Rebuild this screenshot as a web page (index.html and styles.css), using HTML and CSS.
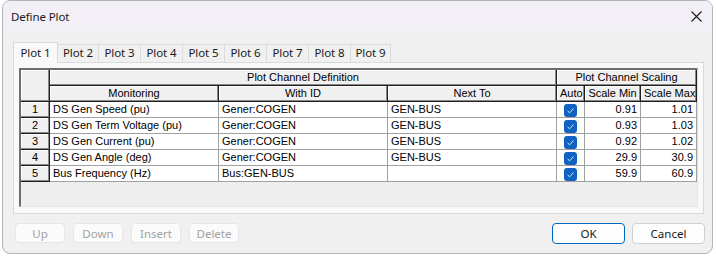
FILE: index.html
```html
<!DOCTYPE html>
<html lang="en">
<head>
<meta charset="UTF-8">
<title>Define Plot</title>
<link rel="stylesheet" href="styles.css">
</head>
<body>

    <!-- Dialog -->
    <div class="window">
        <div class="titlebar">
            <span class="title">Define Plot</span>
            <svg class="close" width="11" height="11" viewBox="0 0 11 11">
                <path d="M0.5 0.5 L10.5 10.5 M10.5 0.5 L0.5 10.5" stroke="#1b1b1b" stroke-width="1.1" fill="none"/>
            </svg>
        </div>

        <div class="content">
            <div class="tabs">
                <div class="tab active">Plot 1</div>
                <div class="tab first">Plot 2</div>
                <div class="tab">Plot 3</div>
                <div class="tab">Plot 4</div>
                <div class="tab">Plot 5</div>
                <div class="tab">Plot 6</div>
                <div class="tab">Plot 7</div>
                <div class="tab">Plot 8</div>
                <div class="tab last">Plot 9</div>
            </div>

            <div class="panel">
                <div class="grid">
                    <table>
                        <colgroup>
                            <col class="c-num">
                            <col class="c-text">
                            <col class="c-text">
                            <col class="c-text">
                            <col class="c-auto">
                            <col class="c-scale">
                            <col class="c-scale">
                        </colgroup>
                        <thead>
                            <tr>
                                <th class="corner" rowspan="2"></th>
                                <th colspan="3">Plot Channel Definition</th>
                                <th colspan="3">Plot Channel Scaling</th>
                            </tr>
                            <tr>
                                <th>Monitoring</th>
                                <th>With ID</th>
                                <th>Next To</th>
                                <th>Auto</th>
                                <th>Scale Min</th>
                                <th>Scale Max</th>
                            </tr>
                        </thead>
                        <tbody id="rows"></tbody>
                    </table>
                </div>
            </div>

            <div class="buttons">
                <div class="button-group">
                    <button class="button" disabled>Up</button>
                    <button class="button" disabled>Down</button>
                    <button class="button" disabled>Insert</button>
                    <button class="button" disabled>Delete</button>
                </div>
                <div class="button-group right">
                    <button class="button default">OK</button>
                    <button class="button">Cancel</button>
                </div>
            </div>
        </div>
    </div>

    <script>
        const channels = [
            ['DS Gen Speed (pu)', 'Gener:COGEN', 'GEN-BUS', '0.91', '1.01'],
            ['DS Gen Term Voltage (pu)', 'Gener:COGEN', 'GEN-BUS', '0.93', '1.03'],
            ['DS Gen Current (pu)', 'Gener:COGEN', 'GEN-BUS', '0.92', '1.02'],
            ['DS Gen Angle (deg)', 'Gener:COGEN', 'GEN-BUS', '29.9', '30.9'],
            ['Bus Frequency (Hz)', 'Bus:GEN-BUS', '', '59.9', '60.9']
        ];

        const checkSvg = '<svg class="check" width="13" height="13" viewBox="0 0 13 13">' +
            '<rect width="13" height="13" rx="3" fill="#0f62c1"/>' +
            '<path d="M3.6 6.9 L5.6 8.8 L9.5 4.6" fill="none" stroke="#dfeaf7" stroke-width="1"/></svg>';

        const tbody = document.getElementById('rows');
        channels.forEach((c, i) => {
            const tr = document.createElement('tr');
            tr.innerHTML =
                '<th>' + (i + 1) + '</th>' +
                '<td>' + c[0] + '</td>' +
                '<td>' + c[1] + '</td>' +
                '<td>' + c[2] + '</td>' +
                '<td class="auto">' + checkSvg + '</td>' +
                '<td class="num">' + c[3] + '</td>' +
                '<td class="num">' + c[4] + '</td>';
            tbody.appendChild(tr);
        });
    </script>
</body>
</html>
```

FILE: styles.css
```css
body {
    margin: 0;
    padding: 0;
    width: 716px;
    height: 257px;
    overflow: hidden;
    background-color: #ffffff;
    font-family: 'Noto Sans', 'Open Sans', sans-serif;
    font-size: 11.5px;
    color: #1a1a1a;
}

.window {
    box-sizing: border-box;
    width: 711px;
    height: 254px;
    margin-left: 2px;
    border: 1px solid #b4b4b4;
    border-radius: 8px;
    background-color: #f0f0f0;
    overflow: hidden;
    display: flex;
    flex-direction: column;
}

.titlebar {
    height: 30px;
    flex-shrink: 0;
    background-color: #f3eff6;
    display: flex;
    align-items: center;
    justify-content: space-between;
    padding: 0 10px 0 8px;
}

.title {
    font-size: 11.5px;
    letter-spacing: -0.1px;
}

.close {
    display: block;
}

.content {
    padding: 11px 8px 0 10px;
}

/* Tabs */
.tabs {
    display: flex;
    align-items: flex-end;
    height: 20px;
}

.tab {
    box-sizing: border-box;
    width: 42px;
    height: 18px;
    line-height: 16px;
    text-align: center;
    border: 1px solid #dadada;
    border-bottom: none;
    border-left: none;
    background-color: #f0f0f0;
    font-size: 11.5px;
    letter-spacing: -0.1px;
}

.tab.first {
    width: 41px;
}

.tab.last {
    width: 40px;
}

.tab.active {
    position: relative;
    z-index: 1;
    width: 45px;
    height: 21px;
    margin-bottom: -1px;
    line-height: 19px;
    border-left: 1px solid #dadada;
    background-color: #f9f9f9;
    padding-bottom: 2px;
}

.panel {
    box-sizing: border-box;
    height: 152px;
    border: 1px solid #dadada;
    background-color: #f9f9f9;
    padding: 5px 5px 6px 5px;
}

/* Grid */
.grid {
    box-sizing: border-box;
    height: 139px;
    border-top: 2px solid #6e6e6e;
    border-left: 2px solid #6e6e6e;
    border-right: 1px solid #e3e3e3;
    border-bottom: 1px solid #e3e3e3;
    background-color: #eeeeee;
    font-family: 'Liberation Sans', Arial, sans-serif;
    font-size: 11px;
    color: #000;
}

table {
    table-layout: fixed;
    width: 676px;
    border-collapse: separate;
    border-spacing: 0;
}

.c-num { width: 29px; }
.c-text { width: 169px; }
.c-auto { width: 28px; }
.c-scale { width: 56px; }

th, td {
    box-sizing: border-box;
    height: 16px;
    padding: 0 3px;
    line-height: 15px;
    white-space: nowrap;
    overflow: hidden;
}

th {
    font-weight: normal;
    text-align: center;
    background-color: #f0f0f0;
    border-right: 1px solid #1e1e1e;
    border-bottom: 1px solid #1e1e1e;
    box-shadow: inset -1px -1px 0 #8a8a8a, inset 1px 1px 0 #ffffff;
}

th.corner {
    height: 32px;
}

td {
    text-align: left;
    background-color: #ffffff;
    border-right: 1px solid #a0a0a0;
    border-bottom: 1px solid #a0a0a0;
}

td.auto {
    text-align: center;
    padding: 0;
}

.check {
    display: block;
    margin: 2px auto 0;
}

td.num {
    text-align: right;
}

/* Buttons */
.buttons {
    display: flex;
    justify-content: space-between;
    align-items: center;
    margin-top: 8px;
    height: 22px;
}

.button-group {
    display: flex;
    gap: 8px;
    margin-left: 2px;
}

.button-group.right {
    gap: 7px;
    margin-left: 0;
    margin-right: -1px;
}

.button {
    box-sizing: border-box;
    width: 50px;
    height: 20px;
    padding: 0;
    border: 1px solid #e6e6e6;
    border-radius: 4px;
    background-color: #fbfbfb;
    color: #a1a1a1;
    font-family: 'Noto Sans', 'Open Sans', sans-serif;
    font-size: 11.5px;
    outline: none;
}

.button-group.right .button {
    width: 73px;
    height: 21px;
    color: #1a1a1a;
    border-color: #d0d0d0;
    background-color: #fdfdfd;
}

.button-group.right .button.default {
    border-color: #0067c0;
}
```
